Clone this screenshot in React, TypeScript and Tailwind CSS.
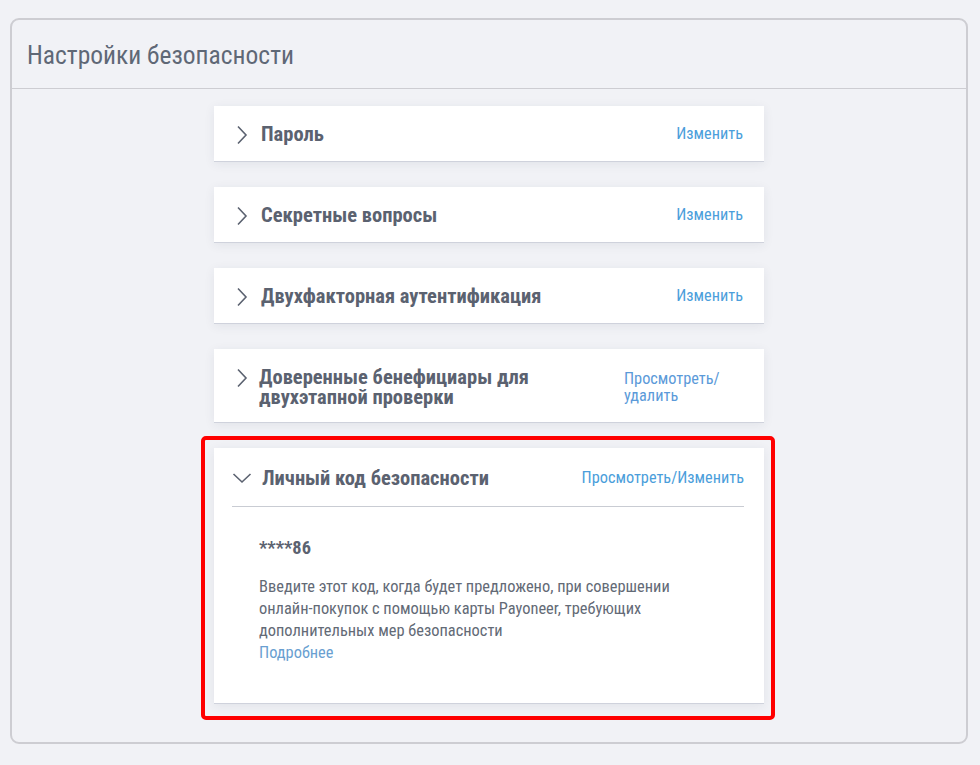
import React from "react";

const FONT = { fontFamily: '"Roboto Condensed", "Liberation Sans Narrow", "DejaVu Sans Condensed", Roboto, sans-serif' };

function ChevronRight() {
  return (
    <svg width="12" height="20" viewBox="0 0 12 20" className="shrink-0">
      <path d="M2 1.5 L10 10 L2 18.5" fill="none" stroke="#5b6270" strokeWidth="1.6" />
    </svg>
  );
}

function ChevronDown() {
  return (
    <svg width="20" height="12" viewBox="0 0 20 12" className="shrink-0">
      <path d="M1.5 2 L10 10 L18.5 2" fill="none" stroke="#5b6270" strokeWidth="1.6" />
    </svg>
  );
}

function Row({ title, link }: { title: string; link: string }) {
  return (
    <div className="w-[550px] h-[56px] bg-white border-b border-[#cfd2dc] shadow-[0_2px_10px_rgba(40,50,80,0.08)] flex items-center pl-[22px] pr-[21px] pt-[2px]">
      <ChevronRight />
      <div className="ml-[13px] flex-1 text-[20.5px] font-bold text-[#5b6270]">{title}</div>
      <div className="text-[16.3px] text-[#4b9edb]">{link}</div>
    </div>
  );
}

export default function App() {
  return (
    <div className="min-h-screen bg-[#f1f2f6] pt-[18px] pl-[10px] pb-[20px]" style={FONT}>
      <div className="w-[958px] h-[726px] border-2 border-[#cdcdd2] rounded-[9px] flex flex-col">
        <div className="h-[69px] border-b border-[#cdcdd2] flex items-center pl-[15px] pt-[2px]">
          <div className="text-[25.5px] text-[#5f6876]">Настройки безопасности</div>
        </div>
        <div className="flex flex-col items-center pt-[17px] gap-[25px]">
          <Row title="Пароль" link="Изменить" />
          <Row title="Секретные вопросы" link="Изменить" />
          <Row title="Двухфакторная аутентификация" link="Изменить" />
          <div className="w-[550px] h-[74px] bg-white border-b border-[#cfd2dc] shadow-[0_2px_10px_rgba(40,50,80,0.08)] flex items-start pt-[18px] pl-[22px] pr-[21px]">
            <div className="pt-[1px]">
              <ChevronRight />
            </div>
            <div className="ml-[11px] w-[330px] text-[20.5px] leading-[20px] font-bold text-[#5b6270]">
              Доверенные бенефициары для
              <br />
              двухэтапной проверки
            </div>
            <div className="ml-auto w-[119px] text-[16.3px] leading-[17px] text-[#5b9ad9] pt-[3px]">
              Просмотреть/
              <br />
              удалить
            </div>
          </div>
          <div className="relative">
            <div className="absolute left-[-13px] right-[-11px] top-[-12px] bottom-[-16px] border-4 border-[#ff0000] rounded-[5px]" />
            <div className="w-[550px] h-[256px] bg-white border-b border-[#cfd2dc] shadow-[0_2px_10px_rgba(40,50,80,0.08)] pl-[18px] pr-[20px]">
              <div className="h-[59px] border-b border-[#c9ccd3] flex items-center pt-[2px]">
                <ChevronDown />
                <div className="ml-[10px] flex-1 text-[20.5px] font-bold text-[#5b6270]">Личный код безопасности</div>
                <div className="text-[16.3px] text-[#4b9edb]">Просмотреть/Изменить</div>
              </div>
              <div className="pl-[27px] pt-[30px]">
                <div className="text-[18.4px] font-bold text-[#5b6270] leading-[22px]">****86</div>
                <div className="mt-[17px] text-[16.4px] leading-[22px] text-[#636a76]">
                  Введите этот код, когда будет предложено, при совершении
                  <br />
                  онлайн-покупок с помощью карты Payoneer, требующих
                  <br />
                  дополнительных мер безопасности
                </div>
                <div className="text-[16.4px] leading-[22px] text-[#6a9fd1]">Подробнее</div>
              </div>
            </div>
          </div>
        </div>
      </div>
    </div>
  );
}
